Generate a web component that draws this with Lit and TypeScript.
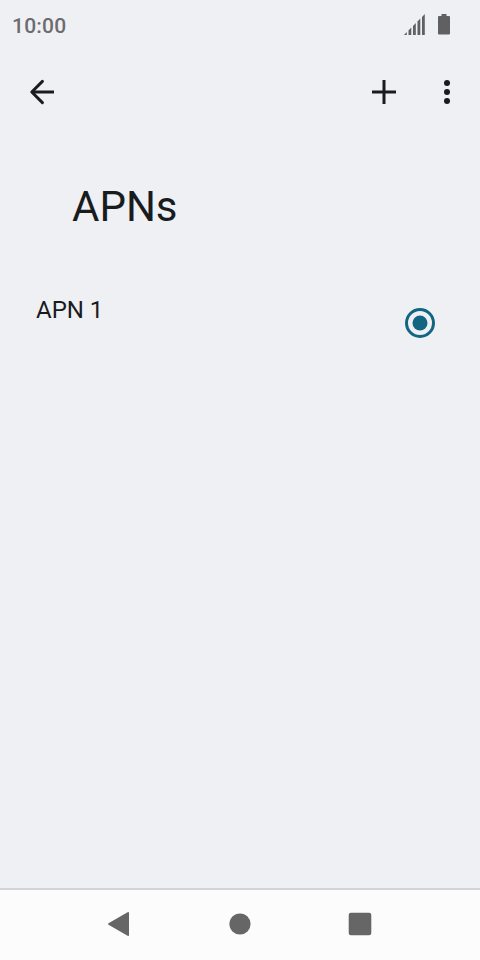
import { LitElement, html, css, svg } from 'lit';
import { customElement, property } from 'lit/decorators.js';

interface Apn {
  name: string;
  selected: boolean;
}

const signalBars = [
  { x: 0, height: 3 },
  { x: 4.5, height: 7.5 },
  { x: 9, height: 12 },
  { x: 13.5, height: 16.5 },
  { x: 18, height: 21 },
];

/**
 * Status bar with clock, signal and battery
 *
 * @element status-bar
 */
@customElement('status-bar')
export class StatusBar extends LitElement {
  @property() time = '';

  static styles = css`
    :host {
      display: flex;
      align-items: center;
      justify-content: space-between;
      box-sizing: border-box;
      height: 48px;
      padding: 3px 30px 0 12px;
      color: #6c6c6e;
      font-size: 21px;
      font-weight: 500;
      letter-spacing: 0.2px;
    }

    .icons {
      display: flex;
      gap: 13px;
      padding-bottom: 3px;
    }

    svg {
      display: block;
      fill: #606062;
    }
  `;

  render() {
    return html`
      <span>${this.time}</span>
      <div class="icons">
        <svg width="21" height="21" viewBox="0 0 21 21">
          ${signalBars.map(
            bar => svg`<path d="M${bar.x} 21v${3 - bar.height}l2.8-3v${bar.height}z" />`
          )}
        </svg>
        <svg width="12" height="21" viewBox="0 0 12 21">
          <path d="M3.5 0h5v2H11q1 0 1 1v16.5q0 1-1 1H1q-1 0-1-1V3q0-1 1-1h2.5z" />
        </svg>
      </div>
    `;
  }
}

/**
 * Row of one access point with its radio button
 *
 * @element apn-row
 */
@customElement('apn-row')
export class ApnRow extends LitElement {
  @property() name = '';
  @property({ type: Boolean }) selected = false;

  static styles = css`
    :host {
      display: flex;
      justify-content: space-between;
      align-items: flex-start;
      padding: 0 42px 0 36px;
      color: #191c1e;
      font-size: 24px;
      line-height: 28px;
    }

    .radio {
      display: block;
      margin-top: 9px;
    }
  `;

  render() {
    return html`
      <span>${this.name}</span>
      <svg class="radio" width="36" height="36" viewBox="0 0 36 36" role="radio" aria-checked=${this.selected}>
        <circle cx="18" cy="18" r="13.5" fill="none" stroke="#126682" stroke-width="3" />
        ${this.selected ? svg`<circle cx="18" cy="18" r="7.5" fill="#126682" />` : ''}
      </svg>
    `;
  }
}

@customElement('app-root')
export class AppRoot extends LitElement {
  @property({ attribute: false }) apns: Apn[] = [{ name: 'APN 1', selected: true }];

  static styles = css`
    :host {
      display: flex;
      flex-direction: column;
      height: 100vh;
      background: #eff0f4;
      color: #191c1e;
      font-family: Roboto, sans-serif;
    }

    svg {
      display: block;
    }

    .toolbar {
      display: flex;
      align-items: center;
      height: 88px;
      padding: 0 15px 0 24px;
      fill: #191c1e;
    }

    .back {
      fill: none;
      stroke: #191c1e;
      stroke-width: 3;
    }

    .add {
      margin-left: auto;
      margin-right: 27px;
    }

    h1 {
      margin: 46px 72px 0;
      font-size: 42px;
      font-weight: 400;
      line-height: 50px;
    }

    .list {
      flex: 1;
      padding-top: 64px;
    }

    .nav {
      display: flex;
      justify-content: center;
      align-items: center;
      gap: 84px;
      box-sizing: border-box;
      height: 72px;
      border-top: 2px solid #d2d3d6;
      padding-bottom: 2px;
      background: #fcfcfc;
      fill: #666;
    }
  `;

  render() {
    return html`
      <status-bar time="10:00"></status-bar>
      <div class="toolbar">
        <svg class="back" width="36" height="36" viewBox="0 0 36 36" aria-label="Back">
          <path d="M30 18H9" />
          <path d="M18.4 7.4L7.8 18l10.6 10.6" stroke-linecap="round" stroke-linejoin="round" />
        </svg>
        <svg class="add" width="36" height="36" viewBox="0 0 36 36" aria-label="New APN">
          <path d="M16.5 6h3v10.5H30v3H19.5V30h-3V19.5H6v-3h10.5z" />
        </svg>
        <svg width="36" height="36" viewBox="0 0 36 36" aria-label="More options">
          <circle cx="18" cy="9" r="3" />
          <circle cx="18" cy="18" r="3" />
          <circle cx="18" cy="27" r="3" />
        </svg>
      </div>
      <h1>APNs</h1>
      <div class="list">
        ${this.apns.map(apn => html`<apn-row name=${apn.name} ?selected=${apn.selected}></apn-row>`)}
      </div>
      <div class="nav">
        <svg width="36" height="36" viewBox="0 0 36 36">
          <path d="M6.5 17.2L25.6 6.2q1.4-.7 1.4.8v22q0 1.5-1.4.8L6.5 18.8q-1.1-.8 0-1.6z" />
        </svg>
        <svg width="36" height="36" viewBox="0 0 36 36">
          <circle cx="18" cy="18" r="10.6" />
        </svg>
        <svg width="36" height="36" viewBox="0 0 36 36">
          <rect x="6.7" y="6.7" width="22.6" height="22.6" rx="2.2" />
        </svg>
      </div>
    `;
  }
}

declare global {
  interface HTMLElementTagNameMap {
    'status-bar': StatusBar;
    'apn-row': ApnRow;
    'app-root': AppRoot;
  }
}
